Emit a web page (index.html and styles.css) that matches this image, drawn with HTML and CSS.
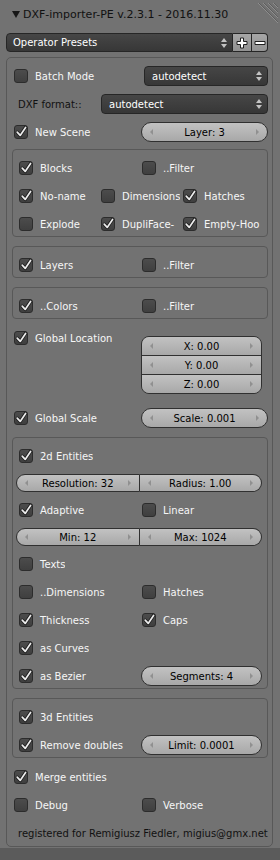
FILE: index.html
```html
<!DOCTYPE html>
<html lang="en">
<head>
    <meta charset="UTF-8">
    <meta name="viewport" content="width=device-width, initial-scale=1.0">
    <title>DXF-importer-PE</title>
    <link rel="stylesheet" href="styles.css">
</head>
<body>
    <!-- shared tick mark for checked boxes -->
    <svg class="defs" width="0" height="0">
        <symbol id="tick" viewBox="0 0 14 14">
            <path d="M3.2 7.2 L6.2 10.4 L11.6 2.4" fill="none" stroke="#1c1c1c" stroke-width="3.4" stroke-linecap="round" stroke-linejoin="round"/>
            <path d="M3.2 7.2 L6.2 10.4 L11.6 2.4" fill="none" stroke="#ececec" stroke-width="1.7" stroke-linecap="round" stroke-linejoin="round"/>
        </symbol>
        <symbol id="updown" viewBox="0 0 6 12">
            <path d="M0 5 L3 1 L6 5 Z M0 7 L3 11 L6 7 Z" fill="#c4c4c4"/>
        </symbol>
    </svg>

    <div class="panel">
        <!-- Panel header -->
        <div class="panel-header">
            <svg class="collapse" width="8" height="8" viewBox="0 0 8 8"><path d="M0 1 L8 1 L4 8 Z" fill="#161616"/></svg>
            <span class="title">DXF-importer-PE v.2.3.1 - 2016.11.30</span>
            <svg class="grip" width="22" height="22" viewBox="0 0 22 22">
                <path d="M2 0 L22 20 M7 0 L22 15 M12 0 L22 10 M17 0 L22 5" stroke="#8e8e8e" stroke-width="1"/>
                <path d="M3 0 L22 19 M8 0 L22 14 M13 0 L22 9 M18 0 L22 4" stroke="#5e5e5e" stroke-width="1"/>
            </svg>
        </div>

        <!-- Presets -->
        <div class="presets">
            <div class="menu">
                <span>Operator Presets</span>
                <svg width="6" height="12"><use href="#updown"/></svg>
            </div>
            <div class="tool">
                <svg width="12" height="12" viewBox="0 0 12 12"><path d="M4.5 1 H7.5 V4.5 H11 V7.5 H7.5 V11 H4.5 V7.5 H1 V4.5 H4.5 Z" fill="#fff" stroke="#1e1e1e" stroke-width="1"/></svg>
            </div>
            <div class="tool last">
                <svg width="12" height="12" viewBox="0 0 12 12"><path d="M1 4.5 H11 V7.5 H1 Z" fill="#fff" stroke="#1e1e1e" stroke-width="1"/></svg>
            </div>
        </div>

        <div class="main-box">
            <div class="row split">
                <div class="check"><span class="cb"></span><span>Batch Mode</span></div>
                <div class="menu batch">
                    <span>autodetect</span>
                    <svg width="6" height="12"><use href="#updown"/></svg>
                </div>
            </div>
            <div class="row dxf">
                <span class="label">DXF format::</span>
                <div class="menu">
                    <span>autodetect</span>
                    <svg width="6" height="12"><use href="#updown"/></svg>
                </div>
            </div>
            <div class="row split">
                <div class="check"><span class="cb"><svg><use href="#tick"/></svg></span><span>New Scene</span></div>
                <div class="num"><span>Layer: 3</span></div>
            </div>

            <div class="box first">
                <div class="row half">
                    <div class="check"><span class="cb"><svg><use href="#tick"/></svg></span><span>Blocks</span></div>
                    <div class="check"><span class="cb"></span><span>..Filter</span></div>
                </div>
                <div class="row thirds">
                    <div class="check"><span class="cb"><svg><use href="#tick"/></svg></span><span>No-name</span></div>
                    <div class="check"><span class="cb"></span><span>Dimensions</span></div>
                    <div class="check"><span class="cb"><svg><use href="#tick"/></svg></span><span>Hatches</span></div>
                </div>
                <div class="row thirds">
                    <div class="check"><span class="cb"></span><span>Explode</span></div>
                    <div class="check"><span class="cb"><svg><use href="#tick"/></svg></span><span>DupliFace-</span></div>
                    <div class="check"><span class="cb"><svg><use href="#tick"/></svg></span><span>Empty-Hoo</span></div>
                </div>
            </div>

            <div class="box">
                <div class="row half">
                    <div class="check"><span class="cb"><svg><use href="#tick"/></svg></span><span>Layers</span></div>
                    <div class="check"><span class="cb"></span><span>..Filter</span></div>
                </div>
            </div>

            <div class="box">
                <div class="row half">
                    <div class="check"><span class="cb"><svg><use href="#tick"/></svg></span><span>..Colors</span></div>
                    <div class="check"><span class="cb"></span><span>..Filter</span></div>
                </div>
            </div>

            <div class="row split loc">
                <div class="check"><span class="cb"><svg><use href="#tick"/></svg></span><span>Global Location</span></div>
                <div class="vec">
                    <div class="num"><span>X: 0.00</span></div>
                    <div class="num"><span>Y: 0.00</span></div>
                    <div class="num"><span>Z: 0.00</span></div>
                </div>
            </div>
            <div class="row split">
                <div class="check"><span class="cb"><svg><use href="#tick"/></svg></span><span>Global Scale</span></div>
                <div class="num"><span>Scale: 0.001</span></div>
            </div>

            <!-- 2d entities -->
            <div class="box">
                <div class="row">
                    <div class="check"><span class="cb"><svg><use href="#tick"/></svg></span><span>2d Entities</span></div>
                </div>
                <div class="row slim pair">
                    <div class="num"><span>Resolution: 32</span></div>
                    <div class="num"><span>Radius: 1.00</span></div>
                </div>
                <div class="row half">
                    <div class="check"><span class="cb"><svg><use href="#tick"/></svg></span><span>Adaptive</span></div>
                    <div class="check"><span class="cb"></span><span>Linear</span></div>
                </div>
                <div class="row slim pair">
                    <div class="num"><span>Min: 12</span></div>
                    <div class="num"><span>Max: 1024</span></div>
                </div>
                <div class="row">
                    <div class="check"><span class="cb"></span><span>Texts</span></div>
                </div>
                <div class="row half">
                    <div class="check"><span class="cb"></span><span>..Dimensions</span></div>
                    <div class="check"><span class="cb"></span><span>Hatches</span></div>
                </div>
                <div class="row half">
                    <div class="check"><span class="cb"><svg><use href="#tick"/></svg></span><span>Thickness</span></div>
                    <div class="check"><span class="cb"><svg><use href="#tick"/></svg></span><span>Caps</span></div>
                </div>
                <div class="row">
                    <div class="check"><span class="cb"><svg><use href="#tick"/></svg></span><span>as Curves</span></div>
                </div>
                <div class="row half">
                    <div class="check"><span class="cb"><svg><use href="#tick"/></svg></span><span>as Bezier</span></div>
                    <div class="num"><span>Segments: 4</span></div>
                </div>
            </div>

            <!-- 3d entities -->
            <div class="box">
                <div class="row">
                    <div class="check"><span class="cb"><svg><use href="#tick"/></svg></span><span>3d Entities</span></div>
                </div>
                <div class="row half">
                    <div class="check"><span class="cb"><svg><use href="#tick"/></svg></span><span>Remove doubles</span></div>
                    <div class="num"><span>Limit: 0.0001</span></div>
                </div>
            </div>

            <div class="row">
                <div class="check"><span class="cb"><svg><use href="#tick"/></svg></span><span>Merge entities</span></div>
            </div>
            <div class="row half">
                <div class="check"><span class="cb"></span><span>Debug</span></div>
                <div class="check"><span class="cb"></span><span>Verbose</span></div>
            </div>
            <div class="row footer">registered for Remigiusz Fiedler, migius@gmx.net</div>
        </div>
    </div>
</body>
</html>
```

FILE: styles.css
```css
* {
    margin: 0;
    padding: 0;
    box-sizing: border-box;
}

body {
    background-color: #5b5b5b;
    color: #f6f6f6;
    font-family: "DejaVu Sans", "Liberation Sans", sans-serif;
    font-size: 10px;
    width: 280px;
}

.defs {
    position: absolute;
}

.panel {
    background-color: #727272;
    padding: 0 7px 1px 6px;
}

/* Header */
.panel-header {
    height: 28px;
    display: flex;
    align-items: center;
    padding-left: 6px;
    color: #111;
    font-size: 11px;
}

.collapse {
    margin-right: 3px;
}

.grip {
    margin-left: auto;
    margin-right: -5px;
    align-self: flex-start;
    margin-top: 3px;
}

/* Presets */
.presets {
    display: flex;
    height: 19px;
    margin-top: 5px;
    margin-right: 5px;
}

.presets .menu {
    flex: 1;
    height: 19px;
    border-radius: 4px 0 0 4px;
    padding-left: 6px;
}

.tool {
    width: 19px;
    display: flex;
    align-items: center;
    justify-content: center;
    background: linear-gradient(#a6a6a6, #929292);
    border: 1px solid #262626;
    border-left: none;
}

.tool.last {
    width: 16px;
    border-radius: 0 4px 4px 0;
}

/* Dropdown */
.menu {
    height: 20px;
    display: flex;
    align-items: center;
    justify-content: space-between;
    padding: 0 5px 0 7px;
    background: linear-gradient(#464646, #373737);
    border: 1px solid #262626;
    border-radius: 4px;
    color: #fff;
}

.menu svg {
    flex: none;
}

.menu.batch {
    margin-left: 3px;
}

/* Main box */
.main-box {
    margin-top: 5px;
    border: 1px solid #585858;
    border-radius: 5px;
    padding: 8px 4px 3px 5px;
    display: flex;
    flex-direction: column;
}

.row {
    height: 20px;
    display: flex;
    align-items: center;
}

.main-box > .row + .row {
    margin-top: 8px;
}

.split {
    display: grid;
    grid-template-columns: 129px 1fr;
}

.half {
    display: grid;
    grid-template-columns: 1fr 1fr;
}

.thirds {
    display: grid;
    grid-template-columns: repeat(3, 1fr);
}

.dxf {
    display: grid;
    grid-template-columns: 89px 1fr;
}

.label {
    color: #111;
    padding-left: 6px;
}

.loc {
    height: auto;
    align-items: start;
    padding-bottom: 6px;
}

/* Checkbox */
.check {
    display: flex;
    align-items: center;
    gap: 7px;
    padding-left: 2px;
    white-space: nowrap;
    overflow: hidden;
    height: 20px;
}

.cb {
    flex: none;
    width: 14px;
    height: 14px;
    border: 1px solid #2c2c2c;
    border-radius: 3px;
    background: linear-gradient(#4c4c4c, #3f3f3f);
}

.cb svg {
    display: block;
    width: 14px;
    height: 14px;
    margin: -1px;
}

/* Number field */
.num {
    height: 20px;
    display: flex;
    align-items: center;
    justify-content: space-between;
    padding: 0 8px;
    background: linear-gradient(#c2c2c2, #a8a8a8);
    border: 1px solid #303030;
    border-radius: 10px;
    color: #000;
    white-space: nowrap;
}

.num::before,
.num::after {
    content: "";
    border-top: 3px solid transparent;
    border-bottom: 3px solid transparent;
}

.num::before {
    border-right: 3px solid #909090;
}

.num::after {
    border-left: 3px solid #909090;
}

.vec {
    margin-top: 8px;
    margin-right: 6px;
    display: flex;
    flex-direction: column;
    border: 1px solid #303030;
    border-radius: 8px;
    overflow: hidden;
}

.vec .num {
    height: 18px;
    border: none;
    border-radius: 0;
}

.vec .num + .num {
    height: 19px;
    border-top: 1px solid #303030;
}

/* Boxes */
.box {
    margin-top: 9px;
    border: 1px solid #585858;
    border-radius: 4px;
    padding: 8px 5px 2px 3px;
    display: flex;
    flex-direction: column;
    gap: 8px;
}

.box.first {
    margin-top: 7px;
}

.box + .row {
    margin-top: 9px;
}

.box .check {
    padding-left: 3px;
}

.slim {
    height: 18px;
}

.pair {
    display: flex;
}

.pair .num {
    flex: 1;
    height: 18px;
}

.pair .num:first-child {
    border-radius: 9px 0 0 9px;
}

.pair .num:last-child {
    border-left: none;
    border-radius: 0 9px 9px 0;
}

.half .num {
    margin-left: 2px;
}

.footer {
    color: #111;
    padding-left: 6px;
    white-space: nowrap;
}
```
